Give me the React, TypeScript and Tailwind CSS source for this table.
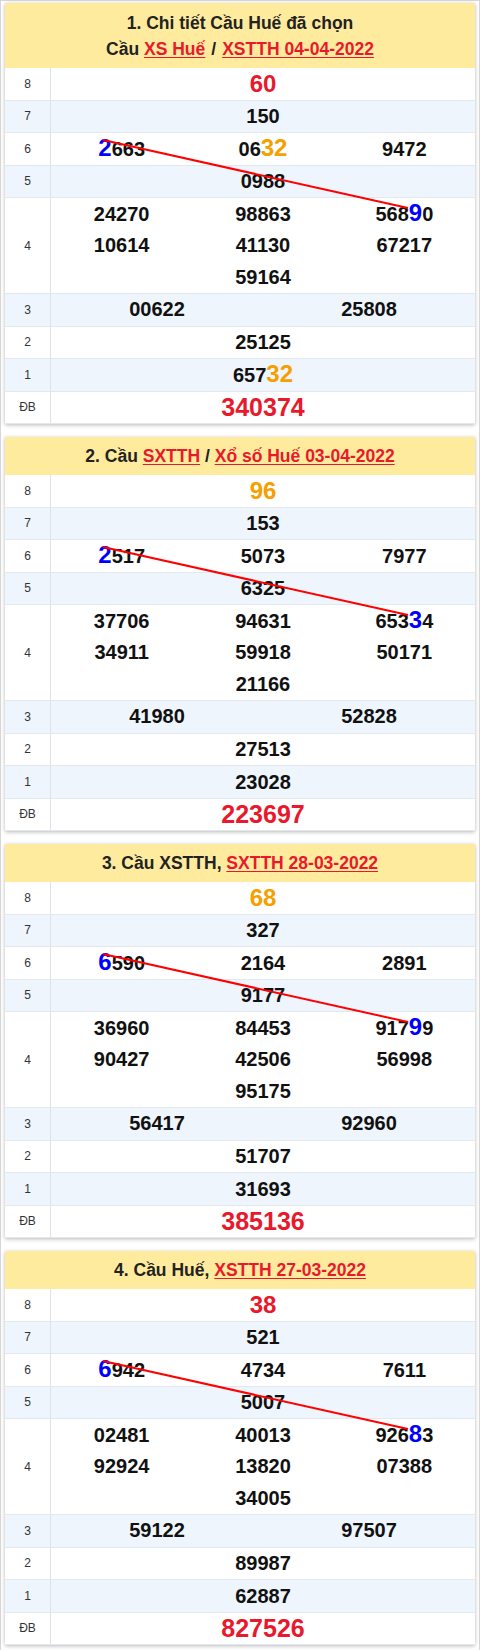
import { ReactNode } from "react";

interface CauCard {
  title: ReactNode;
  g8: string;
  g8Color: string;
  g7: string;
  g6: string[];
  g5: string;
  g4: string[][];
  g3: string[];
  g2: string;
  g1: string;
  db: string;
}

const Link = ({ children }: { children: ReactNode }) => (
  <span className="text-[#e8192c] underline decoration-1 underline-offset-2">{children}</span>
);

const cards: CauCard[] = [
  {
    title: (
      <>
        <div>1. Chi tiết Cầu Huế đã chọn</div>
        <div>
          Cầu <Link>XS Huế</Link>
          <span className="px-[6px]">/</span>
          <Link>XSTTH 04-04-2022</Link>
        </div>
      </>
    ),
    g8: "60",
    g8Color: "text-[#e8192c]",
    g7: "150",
    g6: ["{2}663", "06[32]", "9472"],
    g5: "0988",
    g4: [
      ["24270", "98863", "568{9}0"],
      ["10614", "41130", "67217"],
      ["", "59164", ""],
    ],
    g3: ["00622", "25808"],
    g2: "25125",
    g1: "657[32]",
    db: "340374",
  },
  {
    title: (
      <div>
        2. Cầu <Link>SXTTH</Link> / <Link>Xổ số Huế 03-04-2022</Link>
      </div>
    ),
    g8: "96",
    g8Color: "text-[#f59f00]",
    g7: "153",
    g6: ["{2}517", "5073", "7977"],
    g5: "6325",
    g4: [
      ["37706", "94631", "653{3}4"],
      ["34911", "59918", "50171"],
      ["", "21166", ""],
    ],
    g3: ["41980", "52828"],
    g2: "27513",
    g1: "23028",
    db: "223697",
  },
  {
    title: (
      <div>
        3. Cầu XSTTH, <Link>SXTTH 28-03-2022</Link>
      </div>
    ),
    g8: "68",
    g8Color: "text-[#f59f00]",
    g7: "327",
    g6: ["{6}590", "2164", "2891"],
    g5: "9177",
    g4: [
      ["36960", "84453", "917{9}9"],
      ["90427", "42506", "56998"],
      ["", "95175", ""],
    ],
    g3: ["56417", "92960"],
    g2: "51707",
    g1: "31693",
    db: "385136",
  },
  {
    title: (
      <div>
        4. Cầu Huế, <Link>XSTTH 27-03-2022</Link>
      </div>
    ),
    g8: "38",
    g8Color: "text-[#e8192c]",
    g7: "521",
    g6: ["{6}942", "4734", "7611"],
    g5: "5007",
    g4: [
      ["02481", "40013", "926{8}3"],
      ["92924", "13820", "07388"],
      ["", "34005", ""],
    ],
    g3: ["59122", "97507"],
    g2: "89987",
    g1: "62887",
    db: "827526",
  },
];

// {x} = blue digit, [xy] = orange digits
const Num = ({ v }: { v: string }) => {
  const parts = v.split(/(\{[^}]+\}|\[[^\]]+\])/).filter(Boolean);
  return (
    <span className="text-[20px] font-bold leading-[26px] text-[#111]">
      {parts.map((p, i) => {
        if (p.startsWith("{"))
          return (
            <span key={i} className="text-[24px] text-[#0000ff]">
              {p.slice(1, -1)}
            </span>
          );
        if (p.startsWith("["))
          return (
            <span key={i} className="text-[24px] text-[#f59f00]">
              {p.slice(1, -1)}
            </span>
          );
        return <span key={i}>{p}</span>;
      })}
    </span>
  );
};

const Row = ({
  label,
  blue,
  tall,
  children,
}: {
  label: string;
  blue?: boolean;
  tall?: boolean;
  children: ReactNode;
}) => (
  <div
    className={`flex border-b border-[#e2e8ee] last:border-b-0 ${blue ? "bg-[#eef5fc]" : "bg-white"} ${
      tall ? "h-[96px]" : "h-[32.5px]"
    }`}
  >
    <div className="flex w-[46px] shrink-0 items-center justify-center border-r border-[#dde2e8] text-[12px] text-[#333]">
      {label}
    </div>
    <div className="flex flex-1 flex-col justify-center">{children}</div>
  </div>
);

const Center = ({ children }: { children: ReactNode }) => (
  <div className="flex items-center justify-center">{children}</div>
);

const Card = ({ c, first }: { c: CauCard; first?: boolean }) => (
  <div className="bg-white shadow-[0_1px_4px_rgba(0,0,0,0.28)]">
    <div
      className={`bg-[#ffeb9e] text-center text-[17.5px] font-bold leading-[26px] text-[#222] ${
        first ? "pb-[6px] pt-[7px]" : "py-[6px]"
      }`}
    >
      {c.title}
    </div>
    <div className="relative">
      <Row label="8">
        <Center>
          <span className={`text-[24px] font-bold leading-[26px] ${c.g8Color}`}>{c.g8}</span>
        </Center>
      </Row>
      <Row label="7" blue>
        <Center>
          <Num v={c.g7} />
        </Center>
      </Row>
      <Row label="6">
        <div className="grid grid-cols-3 items-baseline text-center">
          {c.g6.map((n, i) => (
            <div key={i}>
              <Num v={n} />
            </div>
          ))}
        </div>
      </Row>
      <Row label="5" blue>
        <Center>
          <Num v={c.g5} />
        </Center>
      </Row>
      <Row label="4" tall>
        {c.g4.map((line, li) => (
          <div key={li} className="flex h-[32px] flex-col justify-center">
            <div className="grid grid-cols-3 items-baseline text-center">
              {line.map((n, i) => (
                <div key={i}>{n && <Num v={n} />}</div>
              ))}
            </div>
          </div>
        ))}
      </Row>
      <Row label="3" blue>
        <div className="grid grid-cols-2 items-baseline text-center">
          {c.g3.map((n, i) => (
            <div key={i}>
              <Num v={n} />
            </div>
          ))}
        </div>
      </Row>
      <Row label="2">
        <Center>
          <Num v={c.g2} />
        </Center>
      </Row>
      <Row label="1" blue>
        <Center>
          <Num v={c.g1} />
        </Center>
      </Row>
      <Row label="ĐB">
        <Center>
          <span className="text-[25px] font-bold leading-[26px] text-[#e8192c]">{c.db}</span>
        </Center>
      </Row>
      <svg className="pointer-events-none absolute left-0 top-0 overflow-visible" width="469" height="360">
        <line x1="98" y1="72" x2="403" y2="140" stroke="#ff0000" strokeWidth="2" />
      </svg>
    </div>
  </div>
);

export default function App() {
  return (
    <div
      className="min-h-[1650px] border-l border-r border-t border-[#d6d6d6] bg-white px-[4px] pt-[2px]"
      style={{ fontFamily: '"Liberation Sans", Arial, sans-serif' }}
    >
      <div className="flex flex-col gap-[13px]">
        {cards.map((c, i) => (
          <Card key={i} c={c} first={i === 0} />
        ))}
      </div>
    </div>
  );
}
